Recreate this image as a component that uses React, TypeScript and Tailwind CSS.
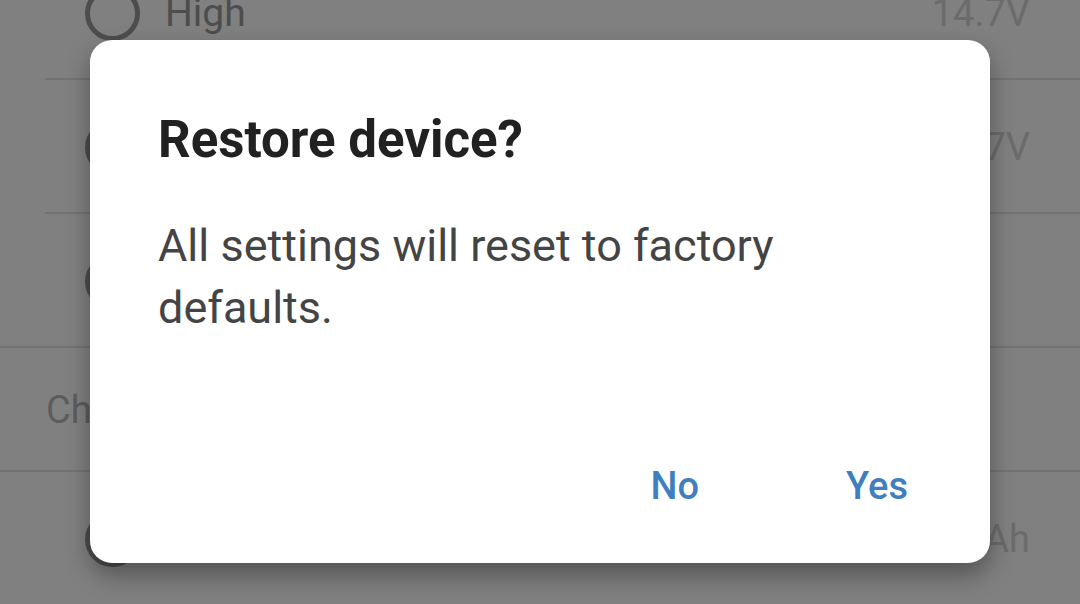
import React from "react";

function Radio({ checked = false }: { checked?: boolean }) {
  return (
    <div className="w-[55px] h-[55px] rounded-full border-[5px] border-[#4d4d4d] flex items-center justify-center shrink-0">
      {checked && <div className="w-[27px] h-[27px] rounded-full bg-[#4d4d4d]" />}
    </div>
  );
}

function Row({ label, value, full = false }: { label: string; value: string; full?: boolean }) {
  return (
    <div className="relative h-[134px] shrink-0 flex items-center pl-[85px] pr-[50px]">
      <Radio />
      <div className="ml-[25px] flex-1 text-[39px] text-[#4d4d4d]">{label}</div>
      <div className="text-[38px] text-[#6b6b6b]">{value}</div>
      <div className={`absolute bottom-0 right-0 h-[2px] bg-[#737373] ${full ? "left-0" : "left-[45px]"}`} />
    </div>
  );
}

export default function App() {
  return (
    <div
      className="relative w-[1080px] h-[604px] overflow-hidden bg-[#808080]"
      style={{ fontFamily: "Roboto, 'Noto Sans', sans-serif" }}
    >
      <div className="flex flex-col mt-[-54px]">
        <Row label="High" value="14.7V" />
        <Row label="Medium" value="14.7V" />
        <Row label="Custom" value="" full />
        <div className="relative h-[124px] shrink-0 flex items-center pl-[46px] text-[38px] text-[#5c5c5c]">
          Charge current
          <div className="absolute bottom-0 left-0 right-0 h-[2px] bg-[#737373]" />
        </div>
        <Row label="Battery" value="200Ah" />
      </div>

      <div className="absolute left-[90px] top-[40px] w-[900px] h-[523px] bg-white rounded-[22px] shadow-[0_12px_24px_rgba(0,0,0,0.35)] flex flex-col px-[68px]">
        <div className="pt-[70px] text-[51px] leading-[60px] font-bold text-[#212121]">
          Restore device?
        </div>
        <div className="mt-[45px] text-[45px] leading-[62px] text-[#444444] w-[680px]">
          All settings will reset to factory defaults.
        </div>
        <div className="mt-auto mb-[48px] flex justify-end gap-[147px] pr-[14px] text-[38px] font-medium text-[#3f7fc0]">
          <span>No</span>
          <span>Yes</span>
        </div>
      </div>
    </div>
  );
}
